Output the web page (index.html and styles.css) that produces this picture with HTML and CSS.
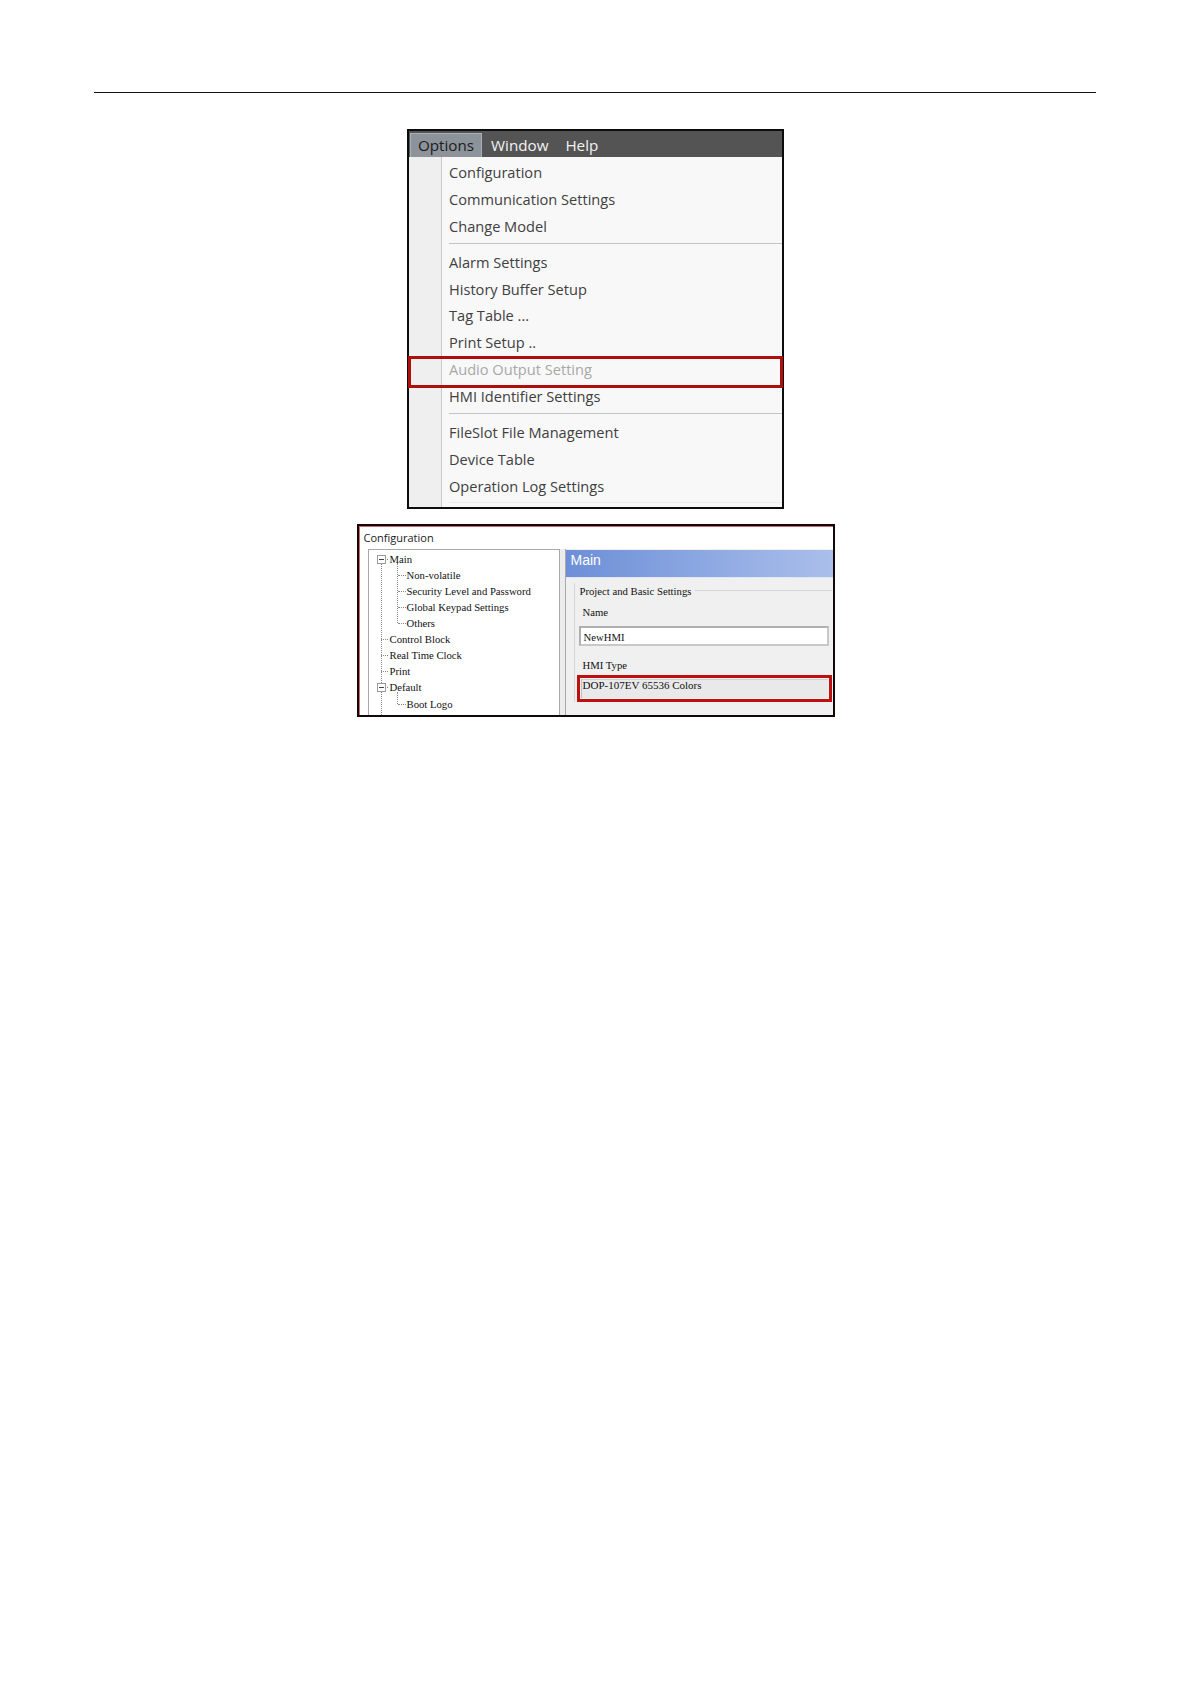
FILE: index.html
```html
<!DOCTYPE html>
<html>
<head>
<meta charset="utf-8">
<link rel="stylesheet" href="styles.css">
</head>
<body>
<div class="page">
  <div class="rule"></div>

  <div class="menu">
    <div class="menubar">
      <span class="mb-item active">Options</span>
      <span class="mb-item">Window</span>
      <span class="mb-item">Help</span>
    </div>
    <div class="menu-body">
      <div class="mi">Configuration</div>
      <div class="mi">Communication Settings</div>
      <div class="mi">Change Model</div>
      <div class="sep"></div>
      <div class="mi">Alarm Settings</div>
      <div class="mi">History Buffer Setup</div>
      <div class="mi">Tag Table ...</div>
      <div class="mi">Print Setup ..</div>
      <div class="mi disabled marked">Audio Output Setting</div>
      <div class="mi">HMI Identifier Settings</div>
      <div class="sep"></div>
      <div class="mi">FileSlot File Management</div>
      <div class="mi">Device Table</div>
      <div class="mi">Operation Log Settings</div>
      <div class="sep last"></div>
    </div>
  </div>

  <div class="config">
    <div class="cfg-title">Configuration</div>
    <div class="cfg-body">
      <div class="tree-box">
        <ul class="tree">
          <li class="node"><span class="exp"></span>Main
            <ul class="sub">
              <li>Non-volatile</li>
              <li>Security Level and Password</li>
              <li>Global Keypad Settings</li>
              <li>Others</li>
            </ul>
          </li>
          <li>Control Block</li>
          <li>Real Time Clock</li>
          <li>Print</li>
          <li class="node"><span class="exp"></span>Default
            <ul class="sub">
              <li>Boot Logo</li>
            </ul>
          </li>
        </ul>
      </div>
      <div class="splitter"></div>
      <div class="panel">
        <div class="panel-head">Main</div>
        <div class="group">
          <div class="legend"><span>Project and Basic Settings</span></div>
          <div class="field-label">Name</div>
          <div class="input">NewHMI</div>
          <div class="field-label hmi">HMI Type</div>
          <div class="readonly-wrap">
            <div class="readonly">DOP-107EV 65536 Colors</div>
          </div>
        </div>
      </div>
    </div>
  </div>
</div>
</body>
</html>
```

FILE: styles.css
```css
html, body {
  margin: 0;
  padding: 0;
  background: #ffffff;
}

.page {
  padding-top: 92px;
  display: flex;
  flex-direction: column;
  align-items: center;
}

.rule {
  width: 1002px;
  height: 0;
  border-top: 1.5px solid #111;
  align-self: flex-start;
  margin-left: 94px;
}

/* ---------- Menu ---------- */
.menu {
  margin-top: 36px;
  width: 377px;
  border: 2px solid #0c0c0c;
  box-sizing: border-box;
  font-family: "Open Sans", "Noto Sans", sans-serif;
  font-size: 14.6px;
}

.menubar {
  height: 26px;
  background: #545454;
  display: flex;
  align-items: stretch;
  padding-left: 1px;
}

.mb-item {
  display: flex;
  align-items: center;
  color: #f2f2f2;
  font-size: 15.2px;
  padding: 0 8px 1px 9px;
  margin-top: 2px;
}

.mb-item.active {
  background: #8c939b;
  color: #1c1c1c;
  border: 1px solid #a9b0b8;
  border-bottom: none;
  padding: 0 7px 1px 7px;
}

.menu-body {
  background: linear-gradient(to right, #efefef 0, #efefef 32px, #c9c9c9 32px, #c9c9c9 33px, #f8f8f8 33px);
  padding-top: 2px;
}

.mi {
  height: 26.9px;
  line-height: 26.9px;
  padding-left: 40px;
  color: #404040;
  white-space: nowrap;
  position: relative;
}

.mi.disabled {
  color: #a8a8a8;
}

.mi.marked::after {
  content: "";
  position: absolute;
  left: -1px;
  right: -1px;
  top: 0;
  bottom: -5px;
  border: 3px solid #b00d0d;
  pointer-events: none;
}

.sep {
  height: 9px;
  margin-left: 40px;
  background: linear-gradient(#c4c4c4, #c4c4c4) no-repeat 0 3px / 100% 1px;
}

.sep.last {
  height: 7px;
  background: linear-gradient(#ececec, #ececec) no-repeat 0 2px / 100% 1px;
}

/* ---------- Configuration ---------- */
.config {
  margin-top: 15px;
  width: 478px;
  height: 193px;
  box-sizing: border-box;
  border: 2px solid #120606;
  box-shadow: inset 1px 1px 0 #c46a6a;
  overflow: hidden;
  display: flex;
  flex-direction: column;
  background: #fff;
}

.cfg-title {
  height: 23px;
  line-height: 24px;
  padding-left: 5px;
  font-family: "Open Sans", "Noto Sans", sans-serif;
  font-size: 11px;
  color: #222;
  flex: none;
}

.cfg-body {
  flex: 1;
  display: flex;
  min-height: 0;
  padding-left: 9px;
}

.tree-box {
  width: 192px;
  box-sizing: border-box;
  border: 1px solid #a9a9a9;
  border-bottom: none;
  background: #fff;
  flex: none;
}

.splitter {
  width: 5px;
  background: #ececec;
  flex: none;
}

.tree, .sub {
  list-style: none;
  margin: 0;
  padding: 0;
}

.tree {
  position: relative;
  padding: 1px 0 0 21px;
  font-family: "Liberation Serif", "Times New Roman", serif;
  font-size: 10.7px;
  color: #111;
  height: 100%;
  box-sizing: border-box;
}

.tree::before {
  content: "";
  position: absolute;
  left: 12px;
  top: 14px;
  bottom: 0;
  border-left: 1px dotted #8a8a8a;
}

.tree li {
  line-height: 16.1px;
  position: relative;
  white-space: nowrap;
}

.tree > li::before {
  content: "";
  position: absolute;
  left: -9px;
  top: 8px;
  width: 7px;
  border-top: 1px dotted #8a8a8a;
}

.sub {
  position: relative;
  padding-left: 17px;
}

.sub::before {
  content: "";
  position: absolute;
  left: 7px;
  top: -4px;
  height: calc(100% - 4px);
  border-left: 1px dotted #8a8a8a;
}

.sub > li::before {
  content: "";
  position: absolute;
  left: -9px;
  top: 8px;
  width: 8px;
  border-top: 1px dotted #8a8a8a;
}

.exp {
  position: absolute;
  left: -13px;
  top: 4px;
  width: 7px;
  height: 7px;
  border: 1px solid #9a9a9a;
  background: #fff linear-gradient(#444, #444) no-repeat center / 5px 1px;
  z-index: 1;
}

.panel {
  flex: 1;
  background: #f0f0f0;
  border-left: 1px solid #a9a9a9;
  padding-top: 1px;
}

.panel-head {
  height: 27px;
  line-height: 21px;
  padding-left: 5px;
  background: linear-gradient(to right, #6d8fd7, #8faae3 55%, #abbfea);
  color: #fff;
  font-family: "Liberation Sans", Arial, sans-serif;
  font-size: 14px;
  border-bottom: 1px solid #dfe6f4;
}

.group {
  margin: 5px 0 0 8px;
  border-left: 1px solid #d6d6d6;
  padding: 0 4px 0 3px;
  font-family: "Liberation Serif", "Times New Roman", serif;
  font-size: 10.7px;
  color: #111;
}

.legend {
  display: flex;
  align-items: center;
  height: 16px;
  margin-left: -8px;
  padding-left: 10px;
}

.legend span {
  padding-right: 4px;
}

.legend::after {
  content: "";
  flex: 1;
  border-top: 1px solid #d6d6d6;
}

.field-label {
  margin-top: 5px;
  padding-left: 5px;
  height: 16px;
  line-height: 16px;
}

.input {
  margin-top: 6px;
  margin-left: 1px;
  height: 20px;
  line-height: 18px;
  width: 250px;
  box-sizing: border-box;
  border: 2px solid #b0b0b0;
  border-right-color: #c8c8c8;
  border-bottom-color: #c8c8c8;
  background: #fff;
  padding-left: 3px;
}

.field-label.hmi {
  margin-top: 11px;
}

.readonly-wrap {
  margin-top: 2px;
  margin-left: -1px;
  width: 255px;
  height: 27px;
  box-sizing: border-box;
  border: 3px solid #bf1010;
  padding: 1px;
}

.readonly {
  height: 100%;
  box-sizing: border-box;
  background: #e9e9e9;
  border-left: 1px solid #c0c0c0;
  border-top: 1px solid #d0d0d0;
  line-height: 10px;
  padding-left: 1px;
  font-size: 11px;
}
```
